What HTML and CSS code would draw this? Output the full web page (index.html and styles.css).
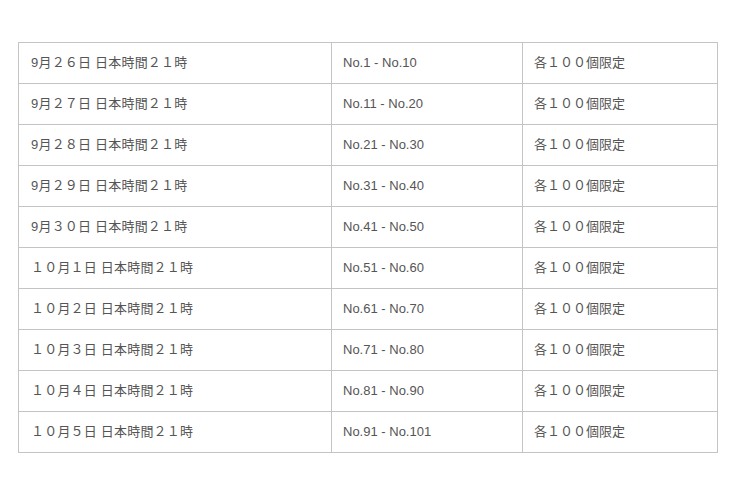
FILE: index.html
```html
<!DOCTYPE html>
<html lang="ja">
<head>
<meta charset="utf-8">
<link rel="stylesheet" href="styles.css">
</head>
<body>
<div class="wrap">
<table class="schedule">
<colgroup><col class="c1"><col class="c2"><col class="c3"></colgroup>
<tbody>
<tr><td class="date">9月２６日 日本時間２１時</td><td>No.1 - No.10</td><td>各１００個限定</td></tr>
<tr><td class="date">9月２７日 日本時間２１時</td><td>No.11 - No.20</td><td>各１００個限定</td></tr>
<tr><td class="date">9月２８日 日本時間２１時</td><td>No.21 - No.30</td><td>各１００個限定</td></tr>
<tr><td class="date">9月２９日 日本時間２１時</td><td>No.31 - No.40</td><td>各１００個限定</td></tr>
<tr><td class="date">9月３０日 日本時間２１時</td><td>No.41 - No.50</td><td>各１００個限定</td></tr>
<tr><td class="date">１０月１日 日本時間２１時</td><td>No.51 - No.60</td><td>各１００個限定</td></tr>
<tr><td class="date">１０月２日 日本時間２１時</td><td>No.61 - No.70</td><td>各１００個限定</td></tr>
<tr><td class="date">１０月３日 日本時間２１時</td><td>No.71 - No.80</td><td>各１００個限定</td></tr>
<tr><td class="date">１０月４日 日本時間２１時</td><td>No.81 - No.90</td><td>各１００個限定</td></tr>
<tr><td class="date">１０月５日 日本時間２１時</td><td>No.91 - No.101</td><td>各１００個限定</td></tr>
</tbody>
</table>
</div>
</body>
</html>
```
FILE: styles.css
```css
html, body {
  margin: 0;
  padding: 0;
  background: #fff;
}
.wrap {
  padding: 42px 0 0 18px;
}
.schedule {
  border-collapse: collapse;
  table-layout: fixed;
  width: 699px;
  font-family: "Liberation Sans", "Noto Sans CJK JP", sans-serif;
  font-size: 13px;
  color: #555;
}
.c1 { width: 313px; }
.c2 { width: 191px; }
.c3 { width: 195px; }
.schedule td {
  border: 1px solid #c4c4c4;
  height: 41px;
  padding: 0 11px;
  line-height: 20px;
  box-sizing: border-box;
  vertical-align: middle;
}
.schedule td.date {
  padding-left: 12px;
  letter-spacing: 0.2px;
}
```
